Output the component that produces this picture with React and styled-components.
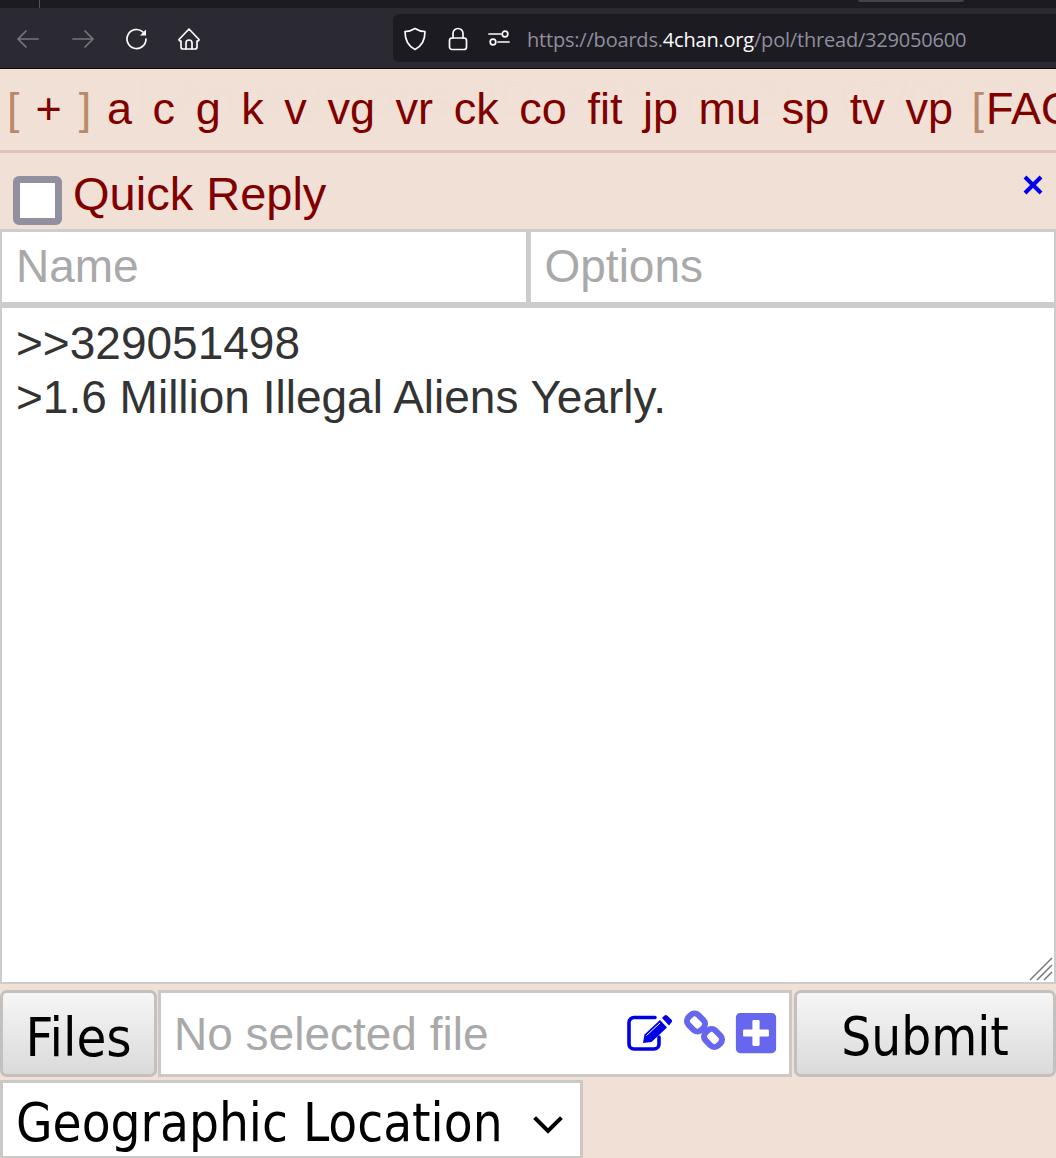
import React from "react";
import styled, { createGlobalStyle } from "styled-components";
import { FaPlusSquare } from "react-icons/fa";

const Global = createGlobalStyle`
  html, body { margin: 0; padding: 0; background: #f0e0d6; }
  * { box-sizing: border-box; }
`;
const Page = styled.div`
  width: 1056px; height: 1158px; overflow: hidden; display: flex; flex-direction: column;
  background: #f0e0d6; font-family: "Liberation Sans", Arial, sans-serif;
`;
const TabStrip = styled.div`
  height: 8px; background: #1c1b22; flex: none; position: relative; display: flex;
  padding-left: 39px; justify-content: space-between; padding-right: 92px;
`;
const TabDivider = styled.div`width: 1px; height: 8px; background: #55545c;`;
const TabEdge = styled.div`width: 106px; height: 2px; background: #42414d; border-radius: 0 0 4px 4px;`;
const Toolbar = styled.div`
  height: 61px; flex: none; background: #2b2a33; border-bottom: 1px solid #0c0c0d;
  display: flex; align-items: center;
`;
const NavIcon = styled.svg`
  width: 24px; height: 24px; flex: none; fill: none; stroke: ${p => p.$dim ? "#77767d" : "#fbfbfe"};
  stroke-width: 1.7; stroke-linecap: round; stroke-linejoin: round;
  margin-left: ${p => p.$ml}px; margin-top: 2px;
`;
const UrlBar = styled.div`
  margin-left: 192px; flex: 1; height: 48px; background: #1c1b22; border-radius: 6px 0 0 6px;
  display: flex; align-items: center; padding-left: 10px;
`;
const UrlText = styled.div`
  margin-left: 16px; padding-top: 3px; font-family: "Open Sans", "Noto Sans", sans-serif; font-size: 20px; color: #8f8f9d; white-space: nowrap; letter-spacing: -0.2px;
`;
const UrlStrong = styled.span`color: #fbfbfe;`;
const BoardNav = styled.nav`
  height: 84px; flex: none; position: relative; overflow: hidden; background: #f0e0d6;
  border-bottom: 3px solid #dfc2b8; display: flex; align-items: center; gap: 20.6px;
  padding: 0 0 2px 7px; font-size: 45px; color: #800000; white-space: nowrap;
`;
const Ghost = styled.div`
  position: absolute; left: 172px; top: 1px; color: #efdfd5; font-size: 49px; white-space: nowrap;
`;
const GhostName = styled.span`font-weight: 700;`;
const GhostBox = styled.div`
  position: absolute; left: 100px; top: 6px; width: 44px; height: 44px; border: 3px solid #efdfd5; border-radius: 4px;
`;
const Bracket = styled.span`color: #b98a68; position: relative;`;
const Plus = styled.span`margin: 0 17px 0 16px; color: #800000;`;
const BoardLink = styled.span`position: relative;`;
const Group = styled.span`position: relative; display: inline-block; margin-right: -5px;`;
const LastGroup = styled.span`position: relative; display: inline-block; margin-left: -2px;`;
const FaqLink = styled.span`position: relative; margin-left: 2px;`;
const Header = styled.div`
  height: 76px; flex: none; display: flex; align-items: flex-end; padding: 0 12px 4px 13px; position: relative;
`;
const Check = styled.div`
  width: 49px; height: 49px; background: #fff; border: 7px solid #90909f; border-radius: 6px; flex: none;
`;
const Title = styled.div`
  margin-left: 11px; font-size: 47px; line-height: 49px; color: #800000; position: relative; top: -7px;
`;
const CloseIcon = styled.svg`
  position: absolute; right: 12px; top: 21px; width: 22px; height: 22px; stroke: #0000ee; stroke-width: 4; fill: none;
`;
const FieldRow = styled.div`display: flex; flex: none; height: 76px;`;
const Field = styled.div`
  flex: 1; background: #fff; border: solid #ccc; border-width: 3px 3px 3px 2px;
  font-size: 46px; color: #a9a9a9; padding: 9px 0 0 14px; line-height: 51px;
  & + & { border-right-width: 2px; }
`;
const TextBox = styled.div`
  flex: none; height: 679px; background: #fff; border: 2px solid #ccc; border-top-width: 3px; position: relative;
  padding: 8px 14px; font-size: 46px; line-height: 54px; color: #333;
`;
const Grip = styled.svg`position: absolute; right: 1px; bottom: 1px; width: 24px; height: 24px; stroke: #777; stroke-width: 1.5; fill: none;`;
const ActionRow = styled.div`display: flex; flex: none; height: 87px; margin-top: 6px; gap: 1px; align-items: stretch;`;
const Btn = styled.div`
  width: ${p => p.$w}px; flex: none; border: 3px solid #c4c0be; border-radius: 7px;
  background: linear-gradient(#f6f6f6, #dadada); color: #000; display: flex; align-items: center; justify-content: center;
  font-family: "DejaVu Sans", sans-serif; font-stretch: condensed; font-size: ${p => p.$fs}px; line-height: 1; padding-top: 8px;
`;
const FileBox = styled.div`
  flex: 1; background: #fff; border: 3px solid #ccc8c6; display: flex; align-items: center; padding: 0 10px 0 13px;
  font-size: 46px; color: #a9a9a9; margin: 0 1px 0 0;
`;
const FileLabel = styled.span`flex: 1;`;
const EditIcon = styled.svg`width: 46px; height: 37px; flex: none; fill: #0000e6; position: relative; top: -1px;`;
const ChainIcon = styled.svg`width: 44px; height: 43px; flex: none; margin-left: 10px; fill: none; stroke: #6666ee; stroke-width: 6; position: relative; top: -3px;`;
const PlusSlot = styled.span`display: flex; color: #6666ee; font-size: 46px; margin-left: 6px; position: relative; top: -1px;`;
const Select = styled.div`
  width: 583px; flex: none; height: 78px; margin-top: 3px; background: #fff; border: 3px solid #ccc8c6; border-bottom-width: 2px;
  display: flex; align-items: center; justify-content: space-between; padding: 8px 17px 0 13px; color: #000;
  font-family: "DejaVu Sans", sans-serif; font-stretch: condensed; font-size: 52.5px; white-space: nowrap; line-height: 1;
`;
const Chevron = styled.svg`width: 30px; height: 18px; fill: none; stroke: #000; stroke-width: 4; stroke-linecap: square; position: relative; top: 1px;`;

const boards = ["a","c","g","k","v","vg","vr","ck","co","fit","jp","mu","sp","tv","vp"];

export default function App() {
  return (
    <Page>
      <Global />
      <TabStrip><TabDivider /><TabEdge /></TabStrip>
      <Toolbar>
        <NavIcon $dim $ml={16} viewBox="0 0 24 24"><path d="M22 12H2M10 4l-8 8 8 8" /></NavIcon>
        <NavIcon $dim $ml={31} viewBox="0 0 24 24"><path d="M2 12h20M14 4l8 8-8 8" /></NavIcon>
        <NavIcon $ml={30} viewBox="0 0 24 24"><path d="M21 12a9.5 9.5 0 1 1-3.2-7.1" /><path d="M21 2.5v6h-6z" fill="#fbfbfe" stroke="none" /></NavIcon>
        <NavIcon $ml={28} viewBox="0 0 24 24"><path d="M12 2L2 12.5c0 1 1 1.5 2 1.5v6c0 1.2.8 2 2 2h12c1.2 0 2-.8 2-2v-6c1 0 2-.5 2-1.5z" /><path d="M9 22v-6a3 3 0 0 1 6 0v6" /></NavIcon>
        <UrlBar>
          <NavIcon $ml={0} viewBox="0 0 24 24"><path d="M12 1.5c-3 2-7 3-10 3 0 8 2 14 10 18 8-4 10-10 10-18-3 0-7-1-10-3z" /></NavIcon>
          <NavIcon $ml={19} viewBox="0 0 24 24"><path d="M7 11V6.5a5 5 0 0 1 10 0V11" /><rect x="3.5" y="11" width="17" height="11.5" rx="2.5" /></NavIcon>
          <NavIcon $ml={17} viewBox="0 0 24 24"><circle cx="18" cy="7" r="2.8" /><circle cx="6" cy="15" r="2.8" /><path d="M2 7h12M11 15h11" /></NavIcon>
          <UrlText>https://boards.<UrlStrong>4chan.org</UrlStrong>/pol/thread/329050600</UrlText>
        </UrlBar>
      </Toolbar>
      <BoardNav>
        <GhostBox />
        <Ghost><GhostName>Anonymous</GhostName> (ID: X8N4mq2) ▪ 07/06/24</Ghost>
        <Group><Bracket>[</Bracket><Plus>+</Plus><Bracket>]</Bracket></Group>
        {boards.map(b => <BoardLink key={b}>{b}</BoardLink>)}
        <LastGroup><Bracket>[</Bracket><FaqLink>FAQ</FaqLink></LastGroup>
      </BoardNav>
      <Header>
        <Check />
        <Title>Quick Reply</Title>
        <CloseIcon viewBox="0 0 22 22"><path d="M3 3l16 16M19 3L3 19" /></CloseIcon>
      </Header>
      <FieldRow>
        <Field>Name</Field>
        <Field>Options</Field>
      </FieldRow>
      <TextBox>
        &gt;&gt;329051498<br />&gt;1.6 Million Illegal Aliens Yearly.
        <Grip viewBox="0 0 24 24"><path d="M23 1L1 23M23 8L8 23M23 15L15 23" /></Grip>
      </TextBox>
      <ActionRow>
        <Btn $w={157} $fs={54}>Files</Btn>
        <FileBox>
          <FileLabel>No selected file</FileLabel>
          <EditIcon viewBox="0 0 46 37">
            <path d="M28 3.5H7a5 5 0 0 0-5 5V30a5 5 0 0 0 5 5h20a5 5 0 0 0 5-5V23" fill="none" stroke="#0000e6" strokeWidth="3.6" strokeLinecap="round" />
            <path d="M16 29l1.5-8.5L33 6l7 7.5L24.5 28z" />
            <path d="M35 4l2.5-2.5a2 2 0 0 1 2.6 0l4.5 4.2a2 2 0 0 1 0 2.6L42 11.5z" />
            <path d="M19.5 21.5L33 9" fill="none" stroke="#fff" strokeWidth="1" />
          </EditIcon>
          <ChainIcon viewBox="0 0 44 43">
            <rect x="4" y="6.5" width="18" height="14" rx="5.5" transform="rotate(45 13 13.5)" />
            <rect x="21" y="22" width="18" height="14" rx="5.5" transform="rotate(45 30 29)" />
          </ChainIcon>
          <PlusSlot><FaPlusSquare /></PlusSlot>
        </FileBox>
        <Btn $w={262} $fs={52.5}>Submit</Btn>
      </ActionRow>
      <Select>Geographic Location<Chevron viewBox="0 0 30 18"><path d="M3 3l12 12 12-12" /></Chevron></Select>
    </Page>
  );
}
